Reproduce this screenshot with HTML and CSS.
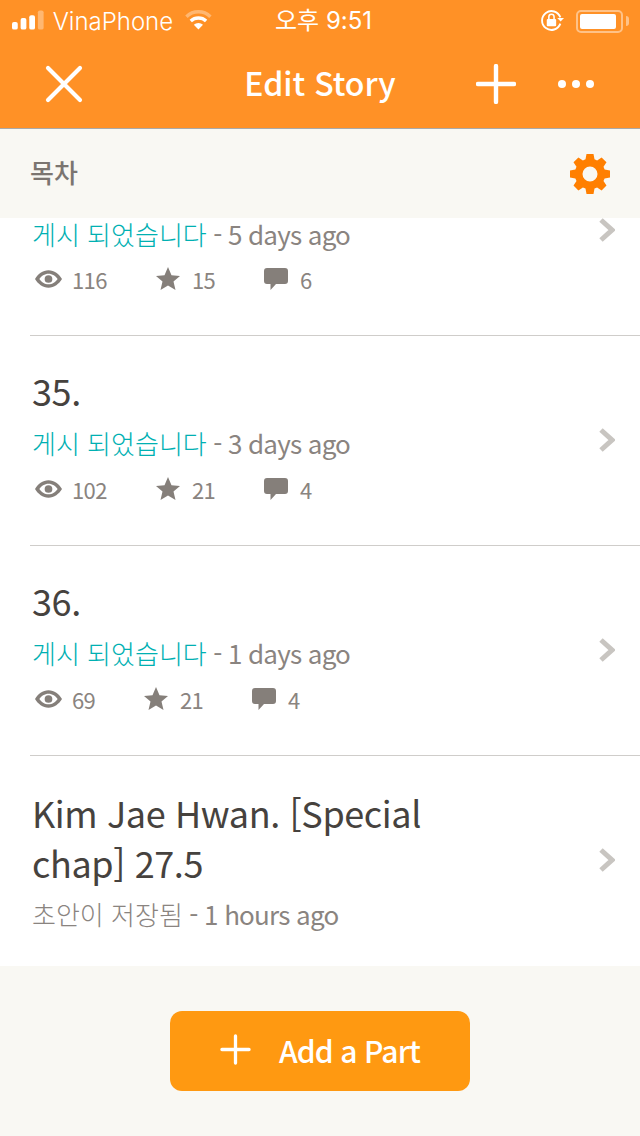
FILE: index.html
```html
<!DOCTYPE html>
<html lang="ko">
<head>
  <meta charset="UTF-8">
  <meta name="viewport" content="width=device-width, initial-scale=1.0">
  <title>Edit Story</title>
  <link rel="stylesheet" href="styles.css">
</head>
<body>
  <div class="top">
    <div class="status">
      <div class="status-left">
        <svg class="signal" width="33" height="20" viewBox="0 0 33 20">
          <rect x="0" y="12" width="6" height="8" rx="2" fill="#fff"/>
          <rect x="9" y="8" width="6" height="12" rx="2" fill="#fff"/>
          <rect x="18" y="5" width="6" height="15" rx="2" fill="#fff"/>
          <rect x="27" y="0" width="6" height="20" rx="2" fill="#fff" opacity="0.35"/>
        </svg>
        <span class="carrier">VinaPhone</span>
        <svg class="wifi" width="28" height="20" viewBox="0 0 28 20">
          <path d="M1.500 6.500a18 18 0 0 1 25 0" fill="none" stroke="#fff" stroke-opacity="0.35" stroke-width="3.600"/>
          <path d="M6 11a12 12 0 0 1 16 0" fill="none" stroke="#fff" stroke-width="3.600"/>
          <path d="M14 20l-4.800-5a7 7 0 0 1 9.600 0z" fill="#fff"/>
        </svg>
      </div>
      <div class="clock">오후 9:51</div>
      <div class="status-right">
        <svg class="lock" width="23" height="21" viewBox="0 0 22 20">
          <path d="M18.500 7a9 9 0 1 0 0 6" fill="none" stroke="#fff" stroke-width="1.800"/>
          <path d="M15.500 7.500h6.500l-3.200 3.500z" fill="#fff"/>
          <rect x="5.500" y="8.500" width="9" height="7" rx="1" fill="#fff"/>
          <path d="M7.500 8.500v-2a2.500 2.500 0 0 1 5 0v2" fill="none" stroke="#fff" stroke-width="1.500"/>
        </svg>
        <div class="battery"><div class="battery-fill"></div></div>
        <div class="battery-tip"></div>
      </div>
    </div>
    <div class="nav">
      <svg class="nav-close" width="38" height="38" viewBox="0 0 38 38">
        <path d="M3 3l32 32M35 3L3 35" stroke="#fff" stroke-width="4.200" stroke-linecap="round"/>
      </svg>
      <h1 class="nav-title">Edit Story</h1>
      <svg class="nav-add" width="40" height="40" viewBox="0 0 40 40">
        <path d="M20 2v36M2 20h36" stroke="#fff" stroke-width="4.400" stroke-linecap="round"/>
      </svg>
      <svg class="nav-more" width="36" height="10" viewBox="0 0 36 10">
        <circle cx="4" cy="5" r="4" fill="#fff"/>
        <circle cx="18" cy="5" r="4" fill="#fff"/>
        <circle cx="32" cy="5" r="4" fill="#fff"/>
      </svg>
    </div>
  </div>

  <div class="toc">
    <span class="toc-title">목차</span>
    <svg class="gear" width="40" height="40" viewBox="0 0 40 40">
      <path fill="#ff7f00" fill-rule="evenodd" d="M16.500 0h7l1 5.300 2.600 1.100 4.500-3 4.900 4.900-3 4.500 1.100 2.600 5.400 1v7l-5.400 1-1.100 2.600 3 4.500-4.900 4.900-4.500-3-2.600 1.100-1 5.400h-7l-1-5.400-2.600-1.100-4.500 3-4.900-4.900 3-4.500-1.100-2.600-5.400-1v-7l5.400-1 1.100-2.600-3-4.500 4.900-4.900 4.500 3 2.600-1.100zM20 12.500a7.500 7.500 0 1 0 0 15 7.500 7.500 0 0 0 0-15z"/>
    </svg>
  </div>

  <div class="parts">
    <div class="part part-first">
      <div class="part-body">
        <div class="part-sub"><span class="published">게시 되었습니다</span> - 5 days ago</div>
        <div class="stats">
          <span class="stat stat-wide"><svg class="icon-eye" width="27" height="20" viewBox="0 0 28 20"><use href="#eye"/></svg>116</span>
          <span class="stat stat-mid"><svg class="icon-star" width="24" height="24" viewBox="0 0 24 24"><use href="#star"/></svg>15</span>
          <span class="stat"><svg class="icon-chat" width="24" height="22" viewBox="0 0 24 22"><use href="#chat"/></svg>6</span>
        </div>
      </div>
      <svg class="chevron" width="16" height="24" viewBox="0 0 16 24"><use href="#chev"/></svg>
    </div>
    <div class="part">
      <div class="part-body">
        <div class="part-title">35.</div>
        <div class="part-sub"><span class="published">게시 되었습니다</span> - 3 days ago</div>
        <div class="stats">
          <span class="stat stat-wide"><svg class="icon-eye" width="27" height="20" viewBox="0 0 28 20"><use href="#eye"/></svg>102</span>
          <span class="stat stat-mid"><svg class="icon-star" width="24" height="24" viewBox="0 0 24 24"><use href="#star"/></svg>21</span>
          <span class="stat"><svg class="icon-chat" width="24" height="22" viewBox="0 0 24 22"><use href="#chat"/></svg>4</span>
        </div>
      </div>
      <svg class="chevron" width="16" height="24" viewBox="0 0 16 24"><use href="#chev"/></svg>
    </div>
    <div class="part">
      <div class="part-body">
        <div class="part-title">36.</div>
        <div class="part-sub"><span class="published">게시 되었습니다</span> - 1 days ago</div>
        <div class="stats">
          <span class="stat stat-narrow"><svg class="icon-eye" width="27" height="20" viewBox="0 0 28 20"><use href="#eye"/></svg>69</span>
          <span class="stat stat-mid"><svg class="icon-star" width="24" height="24" viewBox="0 0 24 24"><use href="#star"/></svg>21</span>
          <span class="stat"><svg class="icon-chat" width="24" height="22" viewBox="0 0 24 22"><use href="#chat"/></svg>4</span>
        </div>
      </div>
      <svg class="chevron" width="16" height="24" viewBox="0 0 16 24"><use href="#chev"/></svg>
    </div>
    <div class="part part-last">
      <div class="part-body">
        <div class="part-title">Kim Jae Hwan. [Special<br>chap] 27.5</div>
        <div class="part-sub"><span class="draft">초안이 저장됨</span> - 1 hours ago</div>
      </div>
      <svg class="chevron" width="16" height="24" viewBox="0 0 16 24"><use href="#chev"/></svg>
    </div>
  </div>

  <div class="bottom">
    <button class="add-part" type="button">
      <svg width="31" height="31" viewBox="0 0 32 32">
        <path d="M16 2v28M2 16h28" stroke="#fff" stroke-width="3.400" stroke-linecap="round"/>
      </svg>
      Add a Part
    </button>
  </div>

  <svg class="defs" width="0" height="0">
    <defs>
      <path id="eye" fill="#857f7a" fill-rule="evenodd" d="M14 1C20 1 25 5 28 10 25 15 20 19 14 19S3 15 0 10C3 5 8 1 14 1zM14 4.500C10 4.500 6.500 7 4.500 10 6.500 13 10 15.500 14 15.500S21.500 13 23.500 10C21.500 7 18 4.500 14 4.500zM14 6a4 4 0 1 1 0 8 4 4 0 0 1 0-8z"/>
      <path id="star" fill="#857f7a" d="M12 0l3.500 8.200 8.500.7-6.500 5.700 2 8.400-7.500-4.500L4.500 23l2-8.400L0 8.900l8.500-.7z"/>
      <path id="chat" fill="#857f7a" d="M3 0h18a3 3 0 0 1 3 3v10a3 3 0 0 1-3 3H12l-5.500 6v-6H3a3 3 0 0 1-3-3V3a3 3 0 0 1 3-3z"/>
      <path id="chev" d="M2 2l11 10L2 22" fill="none" stroke="#c8c5c1" stroke-width="5"/>
    </defs>
  </svg>
</body>
</html>
```

FILE: styles.css
```css
* {
  box-sizing: border-box;
}

body {
  margin: 0;
  height: 1136px;
  overflow: hidden;
  background: #f9f8f3;
  font-family: "Noto Sans CJK KR", "Noto Sans", sans-serif;
  color: #46423e;
}

.top {
  height: 129px;
  background: #ff9126;
  border-bottom: 1px solid #a9a9a9;
}

.status {
  height: 40px;
  padding: 8px 11px 0 12px;
  display: flex;
  justify-content: space-between;
  color: #fff;
  font-family: Inter, "Noto Sans CJK KR", sans-serif;
  font-size: 24px;
}

.status-left,
.status-right {
  width: 200px;
  display: flex;
  align-items: center;
  height: 26px;
}

.status-right {
  justify-content: flex-end;
}

.signal {
  margin-bottom: 2px;
}

.carrier {
  margin-left: 9px;
  font-weight: 300;
}

.wifi {
  margin-left: 12px;
  margin-bottom: 2px;
}

.clock {
  height: 26px;
  line-height: 26px;
  margin-left: 6px;
  white-space: nowrap;
}

.lock {
  margin-right: 12px;
  margin-bottom: 2px;
}

.battery {
  width: 47px;
  height: 23px;
  padding: 2px;
  border: 2px solid rgba(255, 255, 255, 0.45);
  border-radius: 5px;
}

.battery-fill {
  width: 36px;
  height: 100%;
  background: #fff;
  border-radius: 2px;
}

.battery-tip {
  width: 3px;
  height: 10px;
  margin-left: 3px;
  background: rgba(255, 255, 255, 0.45);
  border-radius: 0 3px 3px 0;
}

.nav {
  height: 88px;
  position: relative;
  display: flex;
  align-items: center;
  padding-left: 45px;
}

.nav-title {
  position: absolute;
  top: 0;
  left: 0;
  right: 0;
  margin: 0;
  text-align: center;
  font-size: 32px;
  font-weight: 500;
  line-height: 84px;
  color: #fff;
}

.nav-add {
  margin-left: 393px;
  position: relative;
}

.nav-more {
  margin-left: 42px;
  position: relative;
}

.toc {
  height: 89px;
  padding: 0 30px;
  display: flex;
  align-items: center;
  justify-content: space-between;
  font-size: 26px;
  font-weight: 500;
  color: #7b7570;
}

.toc-title {
  margin-bottom: 4px;
}

.parts {
  height: 748px;
  overflow: hidden;
  background: #fff;
}

.part {
  height: 210px;
  margin-left: 30px;
  padding: 0 25px 0 2px;
  display: flex;
  justify-content: space-between;
  align-items: center;
  border-bottom: 1px solid #cfcdca;
}

.part-first {
  height: 118px;
  align-items: flex-start;
}

.part-last {
  border-bottom: none;
}

.part-body {
  align-self: flex-start;
  padding-top: 29px;
}

.part-first .part-body {
  padding-top: 0;
}

.part-last .part-body {
  padding-top: 31px;
}

.part-title {
  font-size: 36px;
  line-height: 50px;
  letter-spacing: -0.4px;
}

.part-sub {
  margin-top: 8px;
  font-size: 26px;
  line-height: 40px;
  letter-spacing: -0.8px;
  color: #8a8480;
  white-space: nowrap;
}

.part-last .part-sub {
  margin-top: 7px;
}

.part-first .part-sub {
  margin-top: 0;
  line-height: 32px;
}

.published {
  color: #00b0b2;
  font-weight: 300;
  letter-spacing: 0;
}

.draft {
  font-weight: 300;
  letter-spacing: 0;
}

.stats {
  margin-top: 6px;
  padding-left: 3px;
  display: flex;
  align-items: center;
  font-size: 22px;
  line-height: 40px;
  letter-spacing: -0.6px;
  color: #8a8480;
}

.part-first .stats {
  margin-top: 9px;
}

.stat {
  display: flex;
  align-items: center;
  gap: 12px;
}

.icon-eye {
  margin-right: -2px;
}

.stat-wide {
  width: 121px;
}

.stat-narrow {
  width: 109px;
}

.stat-mid {
  width: 108px;
}

.chevron {
  margin-bottom: 2px;
}

.bottom {
  height: 170px;
  padding-top: 45px;
  display: flex;
  justify-content: center;
  align-items: flex-start;
}

.add-part {
  width: 300px;
  height: 80px;
  padding: 0 0 3px;
  display: flex;
  align-items: center;
  justify-content: center;
  gap: 28px;
  border: none;
  border-radius: 12px;
  background: #ff9911;
  color: #fff;
  font-family: inherit;
  font-size: 30px;
  font-weight: 500;
  letter-spacing: -0.9px;
}

.defs {
  position: absolute;
}
```
